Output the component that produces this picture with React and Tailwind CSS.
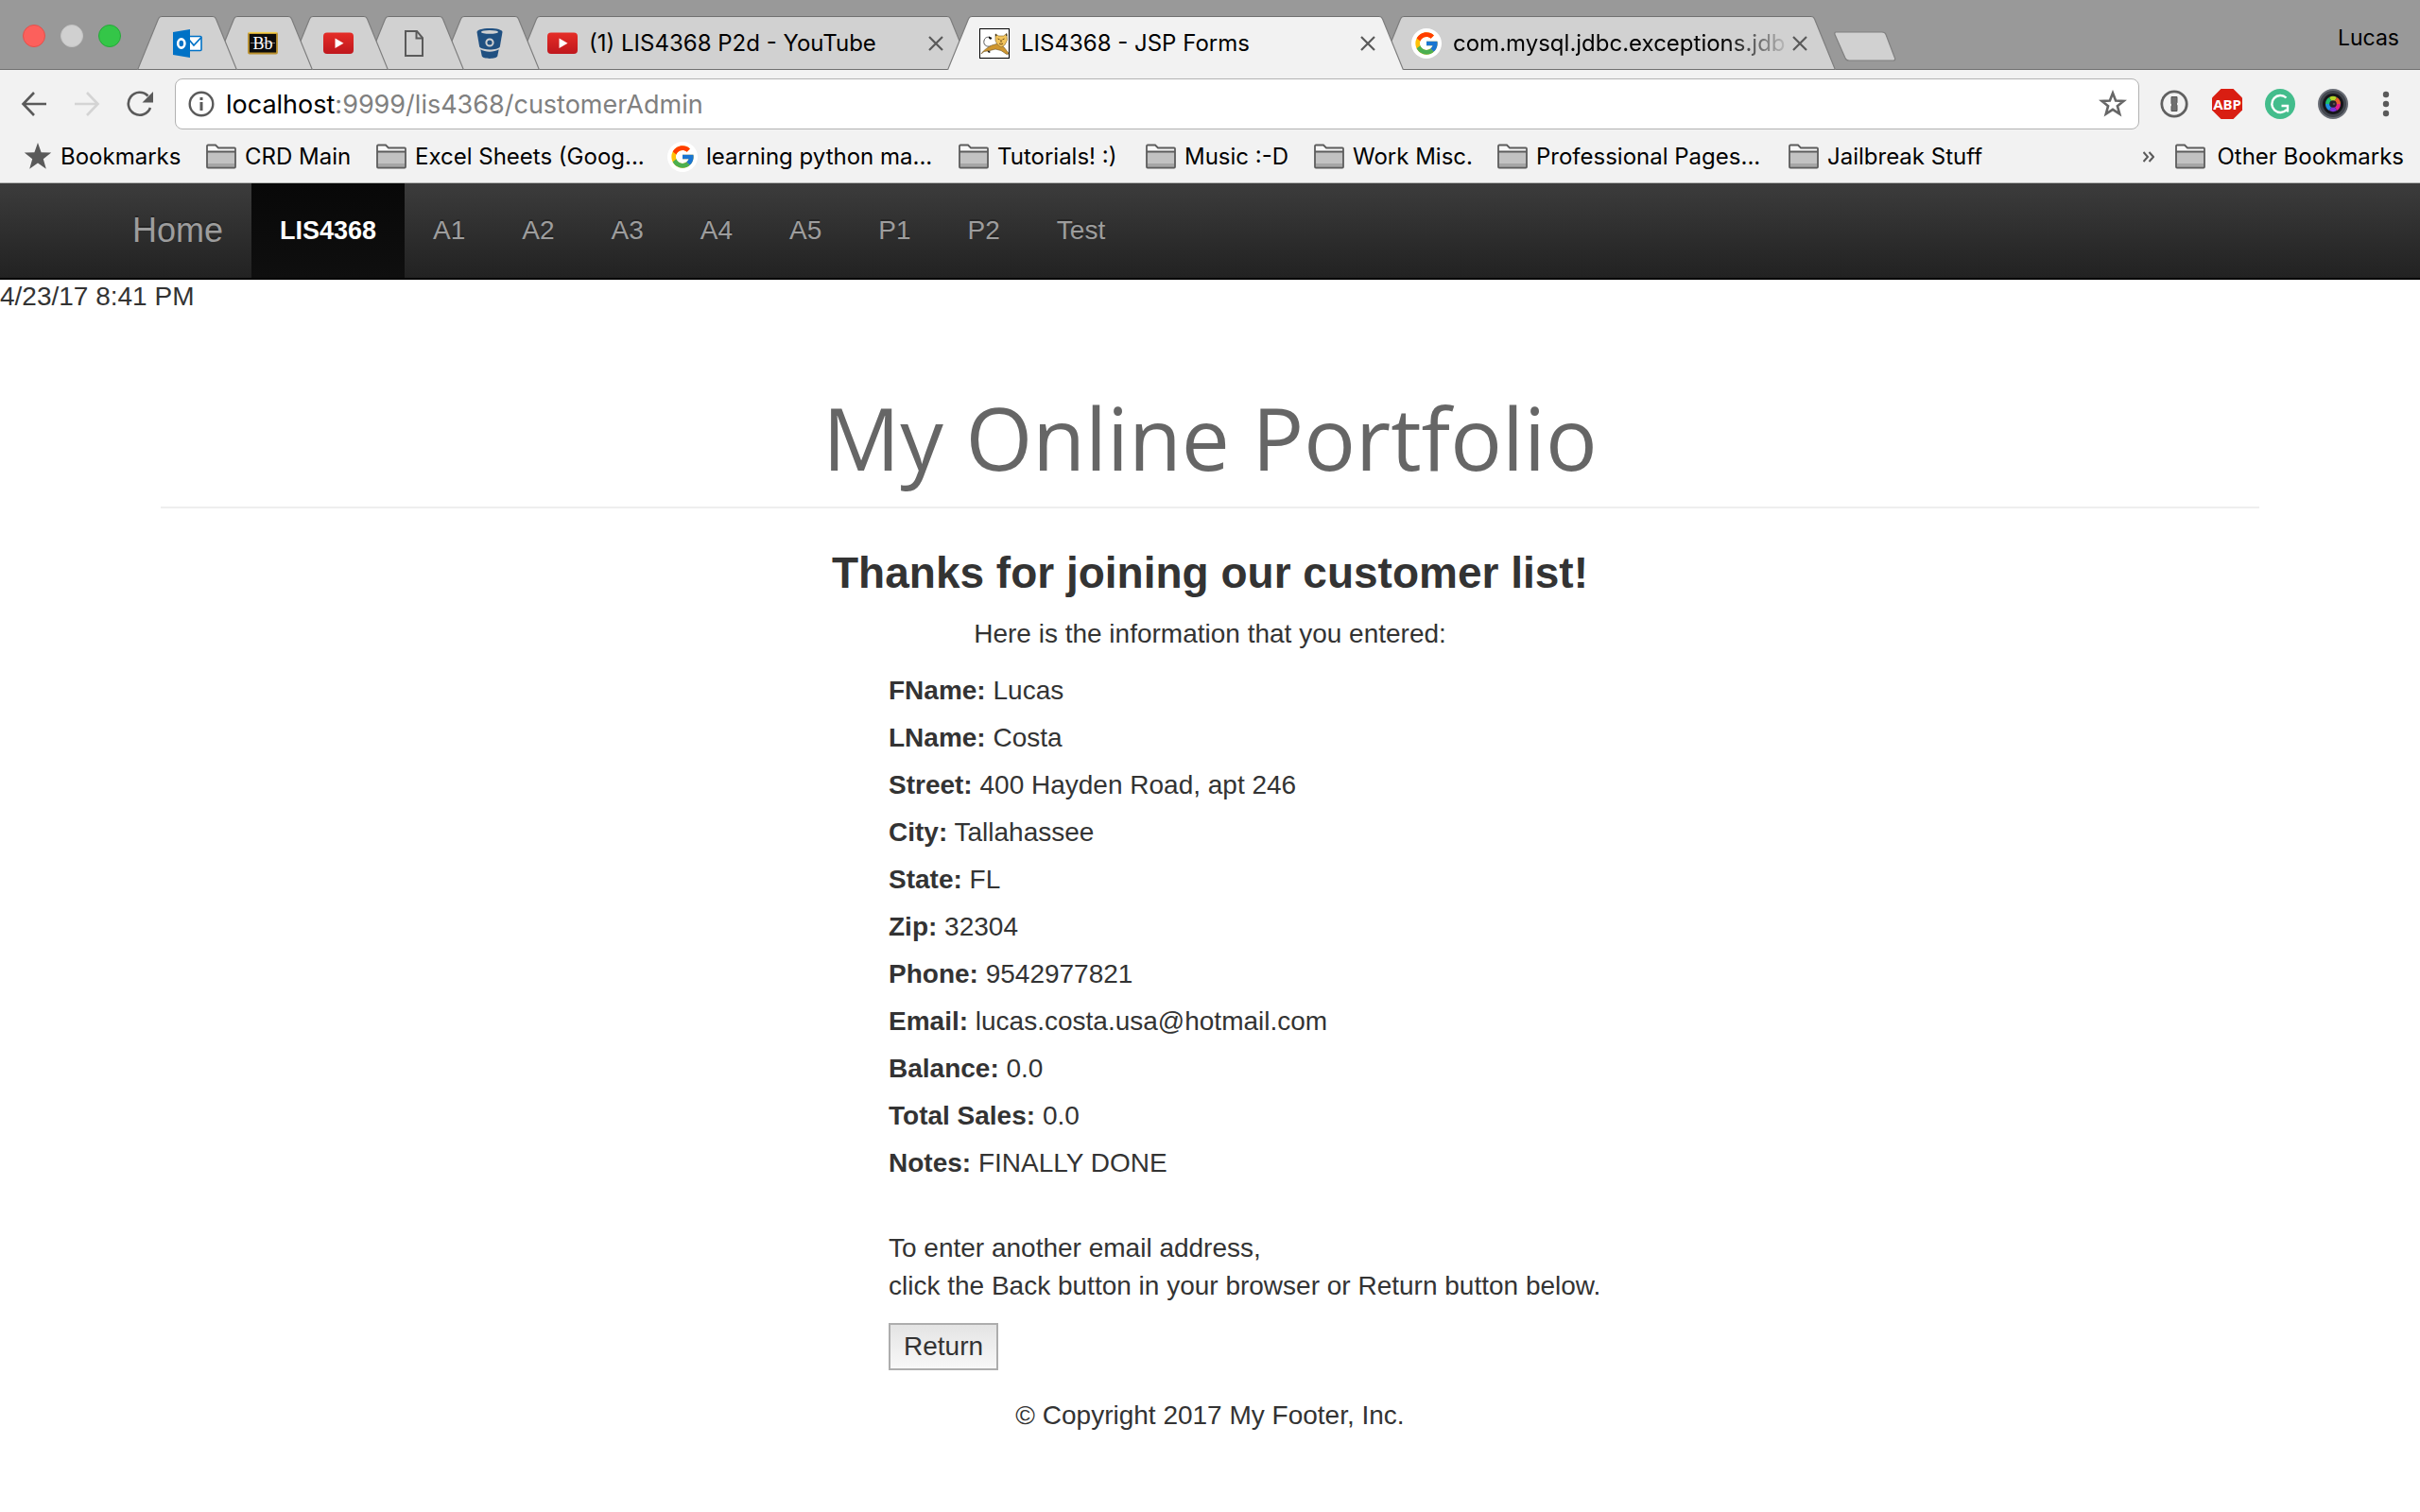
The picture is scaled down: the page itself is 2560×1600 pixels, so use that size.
import React from 'react';
import { FcGoogle } from 'react-icons/fc';

/* ---------- icons ---------- */

function Outlook() {
  return (
    <svg className="size-8" viewBox="0 0 32 32" aria-hidden="true">
      <rect x="17" y="8.5" width="14" height="15" rx="1" fill="#fff" stroke="#0072c6" strokeWidth="1.6" />
      <path d="M18 12l5 6 8-8.5" fill="none" stroke="#0072c6" strokeWidth="1.8" />
      <path d="M1 4l18-3v30L1 28z" fill="#0072c6" />
      <ellipse cx="9.8" cy="16" rx="3.6" ry="4.6" fill="none" stroke="#fff" strokeWidth="2.6" />
    </svg>
  );
}

function Blackboard() {
  return (
    <svg className="size-8" viewBox="0 0 32 32" aria-hidden="true">
      <rect x="1" y="5" width="30" height="21.5" rx="1" fill="#0c0c0c" stroke="#b98f2c" strokeWidth="1.8" />
      <path d="M1 4.6h30" stroke="#f0cf4f" strokeWidth="1.4" />
      <path d="M3 15.5h26" stroke="#9a9a9a" strokeWidth="0.8" />
      <text x="16" y="22" textAnchor="middle" fontFamily="Liberation Serif, serif" fontSize="18" fill="#fff">Bb</text>
    </svg>
  );
}

function YouTube() {
  return (
    <svg className="size-8" viewBox="0 0 32 32" aria-hidden="true">
      <defs>
        <linearGradient id="yt" x1="0" y1="0" x2="0" y2="1">
          <stop offset="0" stopColor="#e52d27" />
          <stop offset="1" stopColor="#bf171d" />
        </linearGradient>
      </defs>
      <rect x="0" y="4.5" width="32" height="22.5" rx="4" fill="url(#yt)" />
      <path d="M12.5 10.5l9 5.2-9 5.2z" fill="#fff" />
    </svg>
  );
}

function Page() {
  return (
    <svg className="size-8" viewBox="0 0 32 32" aria-hidden="true" fill="none" stroke="#5a5a5a" strokeWidth="2">
      <path d="M7 3h12l6 7v19H7z" />
      <path d="M18.5 3v7.5H25" />
    </svg>
  );
}

function Bitbucket() {
  return (
    <svg className="size-8" viewBox="0 0 32 32" aria-hidden="true">
      <path d="M2.5 4C2.500 1.500 8.500 0 16 0s13.500 1.500 13.500 4l-2.700 15.500c-1 1.800-5.500 3-10.800 3s-9.800-1.200-10.800-3z" fill="#205081" />
      <ellipse cx="16" cy="3.900" rx="9" ry="1.900" fill="#d1d1d1" />
      <circle cx="16" cy="15" r="3.600" fill="none" stroke="#d1d1d1" strokeWidth="2" />
      <circle cx="16" cy="15" r="1.400" fill="#205081" />
      <path d="M6.300 22.300c2.500 1.700 6 2.400 9.700 2.400s7.200-.7 9.700-2.400l-1.500 7.200c-.8 1.500-4.200 2.400-8.200 2.400s-7.400-.9-8.200-2.400z" fill="#205081" />
    </svg>
  );
}

function Tomcat() {
  return (
    <svg className="size-8" viewBox="0 0 32 32" aria-hidden="true">
      <rect x="0.500" y="0.500" width="31" height="31" fill="#fff" stroke="#000" />
      <path d="M12 19c-5 1-8-2-7-6s4-4 6-3.500" fill="none" stroke="#555" strokeWidth="1" />
      <path d="M10 8.500l3.500 1.500-1.500 2-2-1.500zM7 22l5 3-2 1zM11 20l3 3-3-1z" fill="#111" />
      <path d="M2 27c1-2 5-6 11-9l7-2 6 4 4 5 1 2-2 .5-6-4-6-1.500-6 1.500-6 1-3 2.500z" fill="#cf962f" stroke="#6b5320" strokeWidth="0.600" />
      <path d="M17 6l3.500 2h5L29 5.500l.5 7-2.500 5-4 2.500-4-3-2-4z" fill="#f2c45c" stroke="#7c622a" strokeWidth="0.600" />
      <path d="M17 8.500l.5-3 1 2zM28 7.500l1-2.500.3 3z" fill="#111" />
      <path d="M19.500 11l2 .8M26.500 11l-2 .8M21 16l2 1 2-1M23 12v3" stroke="#6b4a17" strokeWidth="1" fill="none" />
    </svg>
  );
}

function Google() {
  return (
    <span className="flex size-8 shrink-0 items-center justify-center rounded-full bg-white">
      <FcGoogle className="size-7" aria-hidden="true" />
    </span>
  );
}

function Folder() {
  return (
    <svg className="size-8 shrink-0" viewBox="0 0 32 32" aria-hidden="true">
      <path d="M1 27.500V5a1 1 0 0 1 1-1h8l3 3h17a1 1 0 0 1 1 1v19.500z" fill="#f8f8f8" />
      <rect x="1" y="11" width="30" height="16" fill="#c2c2c2" />
      <path d="M2 24.500h28" stroke="#a6a6a6" strokeWidth="3" />
      <path d="M1 26.500V4.500a1 1 0 0 1 1-1h8l3 3h17a1 1 0 0 1 1 1v19a1 1 0 0 1-1 1H2a1 1 0 0 1-1-1zM1 10.500h30" fill="none" stroke="#5c5c5c" strokeWidth="1.800" />
    </svg>
  );
}

function StarFull() {
  return (
    <svg className="h-8 w-[30px] shrink-0" viewBox="0 0 30 32" aria-hidden="true">
      <path d="M15 1l3.600 10.300 10.600.3-8.400 6.700 3 10.500-8.800-6.200-8.800 6.200 3-10.500L.8 11.600l10.600-.3z" fill="#5a5a5a" />
    </svg>
  );
}

/* ---------- browser tabs ---------- */

function Slope({ active, right }) {
  const fill = active ? '#f2f2f2' : '#d1d1d1';
  return (
    <svg className={right ? 'h-[57px] w-[26px] shrink-0 -scale-x-100' : 'h-[57px] w-[26px] shrink-0'} viewBox="0 0 26 57" aria-hidden="true">
      <path d="M0.500 57L22.500 3Q23.500 0.500 26 0.500V57z" fill={fill} />
      <path d="M0.500 57L22.500 3Q23.500 0.500 26 0.500" fill="none" stroke="#7d7d7d" strokeWidth="1.200" />
      {!active && <path d="M1 56.500H26" stroke="#707070" />}
    </svg>
  );
}

function Tab({ icon, title, active, pinned, layer, fade }) {
  const tone = active ? 'border-b-[#f2f2f2] bg-[#f2f2f2]' : 'border-b-[#707070] bg-[#d1d1d1]';
  return (
    <div className={`relative -mr-[26px] flex h-[57px] ${layer} ${pinned ? 'shrink-0' : 'w-[483px] min-w-0'}`}>
      <Slope active={active} />
      <div className={`flex min-w-0 flex-1 items-center border-y border-t-[#707070] ${tone} ${pinned ? 'px-[11px]' : 'pr-1 pl-2'}`}>
        <span className="size-8 shrink-0">{icon}</span>
        {title && (
          <>
            <span className={`ml-3 min-w-0 flex-1 overflow-hidden whitespace-nowrap text-[24px] leading-8 text-black ${fade ? 'mask-r-from-80% mask-r-to-100%' : ''}`}>{title}</span>
            <button type="button" aria-label={`Close ${title}`} className="shrink-0">
              <svg className="size-4" viewBox="0 0 16 16" stroke="#5a5a5a" strokeWidth="2.200"><path d="M1 1l14 14M15 1L1 15" /></svg>
            </button>
          </>
        )}
      </div>
      <Slope active={active} right />
    </div>
  );
}

function TabStrip() {
  return (
    <div className="flex h-[74px] items-end bg-[#999999] shadow-[inset_0_-1px_0_#707070]">
      <div className="flex gap-4 self-start pt-[26px] pr-[17px] pl-6">
        <button type="button" aria-label="Close window" className="size-6 rounded-full border border-[#e2504b] bg-[#fc605c]" />
        <button type="button" aria-label="Minimize window" className="size-6 rounded-full border border-[#c4c4c4] bg-[#d0d0d0]" />
        <button type="button" aria-label="Zoom window" className="size-6 rounded-full border border-[#27a83a] bg-[#34c648]" />
      </div>
      <Tab pinned icon={<Outlook />} layer="z-[8]" />
      <Tab pinned icon={<Blackboard />} layer="z-[7]" />
      <Tab pinned icon={<YouTube />} layer="z-[6]" />
      <Tab pinned icon={<Page />} layer="z-[5]" />
      <Tab pinned icon={<Bitbucket />} layer="z-[4]" />
      <Tab icon={<YouTube />} title="(1) LIS4368 P2d - YouTube" layer="z-[3]" />
      <Tab active icon={<Tomcat />} title="LIS4368 - JSP Forms" layer="z-[9]" />
      <Tab fade icon={<Google />} title="com.mysql.jdbc.exceptions.jdb" layer="z-[2]" />
      <button type="button" aria-label="New tab" className="mb-[9px] ml-6 shrink-0">
        <svg className="h-8 w-[66px]" viewBox="0 0 66 32">
          <path d="M2 1h49q3 0 4 2.500l9.500 25q.8 2.500-1.500 2.500H16q-3 0-4-2.500L1 3.500Q.5 1 2 1z" fill="#d1d1d1" stroke="#808080" strokeWidth="1.200" />
        </svg>
      </button>
      <button type="button" className="mr-[22px] mb-[18px] ml-auto text-[23px] leading-8 text-black">Lucas</button>
    </div>
  );
}

/* ---------- toolbar ---------- */

function Toolbar() {
  return (
    <div className="flex items-center bg-[#f2f2f2] pt-[9px] pr-5 pl-[22px]">
      <div className="flex w-[163px] gap-7">
        <button type="button" aria-label="Back">
          <svg className="size-7" viewBox="0 0 28 28" fill="none" stroke="#5a5a5a" strokeWidth="2.600"><path d="M27 14H3M14 2L2.500 14 14 26" /></svg>
        </button>
        <button type="button" aria-label="Forward">
          <svg className="size-7" viewBox="0 0 28 28" fill="none" stroke="#d4d4d4" strokeWidth="2.600"><path d="M1 14h24M14 2l11.500 12L14 26" /></svg>
        </button>
        <button type="button" aria-label="Reload">
          <svg className="size-7" viewBox="0 0 28 28"><path d="M22.500 5.500A12 12 0 1 0 25 18" fill="none" stroke="#5a5a5a" strokeWidth="2.600" /><path d="M28 1v11.500H16.500z" fill="#5a5a5a" /></svg>
        </button>
      </div>
      <div className="flex h-[54px] min-w-0 flex-1 items-center rounded-lg border border-[#b2b2b2] bg-white pr-3 pl-[13px]">
        <svg className="size-7 shrink-0" viewBox="0 0 28 28" fill="none" stroke="#5a5a5a" strokeWidth="2.400" aria-hidden="true">
          <circle cx="14" cy="14" r="12.300" />
          <path d="M14 12v9M14 7v3" strokeWidth="3" />
        </svg>
        <div className="ml-3 flex-1 pt-0.5 text-[27px] leading-9 text-[#808080]"><span className="text-black">localhost</span>:9999/lis4368/customerAdmin</div>
        <button type="button" aria-label="Bookmark this page">
          <svg className="size-[30px]" viewBox="0 0 30 30"><path d="M15 3.500l3.100 8 8.400.4-6.600 5.300 2.300 8.300-7.200-4.700-7.200 4.700 2.300-8.300-6.600-5.300 8.400-.4z" fill="none" stroke="#666" strokeWidth="2.600" /></svg>
        </button>
      </div>
      <div className="ml-[21px] flex gap-6">
        <button type="button" aria-label="1Password">
          <svg className="size-8" viewBox="0 0 32 32"><circle cx="16" cy="16" r="13.200" fill="#f2f2f2" stroke="#606060" strokeWidth="2.800" /><path d="M13 8.500h6v6l-1 1.500 1 1.500v6h-6v-5l1-1.500-1-1.500z" fill="#707070" stroke="#555" /></svg>
        </button>
        <button type="button" aria-label="AdBlock Plus">
          <svg className="size-8" viewBox="0 0 32 32"><path d="M9.500 0h13L32 9.500v13L22.500 32h-13L0 22.500v-13z" fill="#d91e12" /><text x="16" y="21.500" textAnchor="middle" fontFamily="Noto Sans, sans-serif" fontWeight="700" fontSize="15" fill="#fff">ABP</text></svg>
        </button>
        <button type="button" aria-label="Grammarly">
          <svg className="size-8" viewBox="0 0 32 32"><circle cx="16" cy="16" r="16" fill="#43bd8c" /><path d="M22.500 9.500a9 9 0 1 0 .5 12.500M17.500 18h6.500v6.500" fill="none" stroke="#fff" strokeWidth="2.400" /></svg>
        </button>
        <button type="button" aria-label="Camera">
          <svg className="size-8" viewBox="0 0 32 32">
            <circle cx="16" cy="16" r="15" fill="#41454d" stroke="#6a6e76" strokeWidth="2" />
            <circle cx="16" cy="16" r="11" fill="#15151a" />
            <g transform="translate(8 8)">
              <path d="M8 8L4 1A8 8 0 0 1 12 1z" fill="#b4d62a" /><path d="M8 8l4-7a8 8 0 0 1 4 7z" fill="#e8612c" />
              <path d="M8 8h8a8 8 0 0 1-4 7z" fill="#e0218a" /><path d="M8 8l4 7a8 8 0 0 1-8 0z" fill="#7a35d8" />
              <path d="M8 8l-4 7A8 8 0 0 1 0 8z" fill="#1f8fe0" /><path d="M8 8H0a8 8 0 0 1 4-7z" fill="#1fc06a" />
              <circle cx="8" cy="8" r="3.800" fill="#23202a" /><circle cx="9" cy="8" r="1.300" fill="#5a4a4a" />
            </g>
          </svg>
        </button>
        <button type="button" aria-label="Menu">
          <svg className="size-8" viewBox="0 0 32 32" fill="#5a5a5a"><circle cx="16" cy="6" r="3.200" /><circle cx="16" cy="16" r="3.200" /><circle cx="16" cy="26" r="3.200" /></svg>
        </button>
      </div>
    </div>
  );
}

const bookmarks = [
  { label: 'Bookmarks', icon: <StarFull />, width: 'w-[193px]' },
  { label: 'CRD Main', icon: <Folder />, width: 'w-[180px]' },
  { label: 'Excel Sheets (Goog...', icon: <Folder />, width: 'w-[308px]' },
  { label: 'learning python ma...', icon: <Google />, width: 'w-[308px]' },
  { label: 'Tutorials! :)', icon: <Folder />, width: 'w-[198px]' },
  { label: 'Music :-D', icon: <Folder />, width: 'w-[178px]' },
  { label: 'Work Misc.', icon: <Folder />, width: 'w-[194px]' },
  { label: 'Professional Pages...', icon: <Folder />, width: 'w-[308px]' },
  { label: 'Jailbreak Stuff', icon: <Folder />, width: 'w-[220px]' },
];

function BookmarksBar() {
  return (
    <div className="flex h-[57px] items-center border-b border-[#b4b6b4] bg-[#f2f2f2] pt-0.5 pr-[17px] pl-[25px] text-[24px] leading-8 text-black">
      {bookmarks.map((b) => (
        <a key={b.label} href="#" className={`flex shrink-0 items-center gap-[9px] whitespace-nowrap ${b.width}`}>
          {b.icon}
          {b.label}
        </a>
      ))}
      <button type="button" aria-label="More bookmarks" className="mr-[22px] ml-auto">
        <svg className="size-3" viewBox="0 0 12 12" fill="none" stroke="#5a5a5a" strokeWidth="2"><path d="M0.500 1L5 6 .5 11M6.500 1L11 6l-4.500 5" /></svg>
      </button>
      <a href="#" className="flex shrink-0 items-center gap-3 whitespace-nowrap"><Folder />Other Bookmarks</a>
    </div>
  );
}

/* ---------- page ---------- */

const links = ['A1', 'A2', 'A3', 'A4', 'A5', 'P1', 'P2', 'Test'];

function NavBar() {
  return (
    <nav className="border-b-2 border-black bg-linear-to-b from-[#3c3c3c] to-[#222222]">
      <div className="mx-auto flex max-w-[2340px] text-[28px] leading-10 text-[#9d9d9d] [text-shadow:0_-2px_0_rgba(0,0,0,0.25)]">
        <a href="#" className="p-[30px] text-[36px]">Home</a>
        <a href="#" aria-current="page" className="bg-linear-to-b from-[#080808] to-[#0f0f0f] p-[30px] text-[27px] font-bold text-white">LIS4368</a>
        {links.map((l) => (
          <a key={l} href="#" className="p-[30px]">{l}</a>
        ))}
      </div>
    </nav>
  );
}

const fields = [
  ['FName:', 'Lucas'],
  ['LName:', 'Costa'],
  ['Street:', '400 Hayden Road, apt 246'],
  ['City:', 'Tallahassee'],
  ['State:', 'FL'],
  ['Zip:', '32304'],
  ['Phone:', '9542977821'],
  ['Email:', 'lucas.costa.usa@hotmail.com'],
  ['Balance:', '0.0'],
  ['Total Sales:', '0.0'],
  ['Notes:', 'FINALLY DONE'],
];

export default function App() {
  return (
    <div className="min-h-screen bg-white">
      <header className="font-['Inter',sans-serif]">
        <TabStrip />
        <Toolbar />
        <BookmarksBar />
      </header>
      <div className="font-['Liberation_Sans',Arial,sans-serif] text-[28px] leading-10 text-[#333333]">
        <NavBar />
        <p className="leading-9">4/23/17 8:41 PM</p>
        <main className="mx-auto mt-[78px] max-w-[2340px] px-[60px]">
          <h1 className="border-b-2 border-[#eeeeee] pb-5 text-center font-['Open_Sans',sans-serif] text-[91px] leading-[106px] font-medium text-[#666666]">My Online Portfolio</h1>
          <h2 className="mt-[42px] text-center text-[46px] leading-[52px] font-bold">Thanks for joining our customer list!</h2>
          <p className="mt-[19px] text-center">Here is the information that you entered:</p>
          <div className="mt-5 ml-[calc(50%-340px)]">
            {fields.map(([k, v]) => (
              <p key={k} className="mb-2.5"><b>{k}</b> {v}</p>
            ))}
            <p className="mt-[50px]">To enter another email address,<br />click the Back button in your browser or Return button below.</p>
            <button type="button" className="mt-[19px] block h-[50px] border-2 border-[#adadad] bg-linear-to-b from-[#e4e4e4] to-[#f8f8f8] px-3.5 leading-[44px]">Return</button>
          </div>
          <footer className="mt-7 text-center">© Copyright 2017 My Footer, Inc.</footer>
        </main>
      </div>
    </div>
  );
}
